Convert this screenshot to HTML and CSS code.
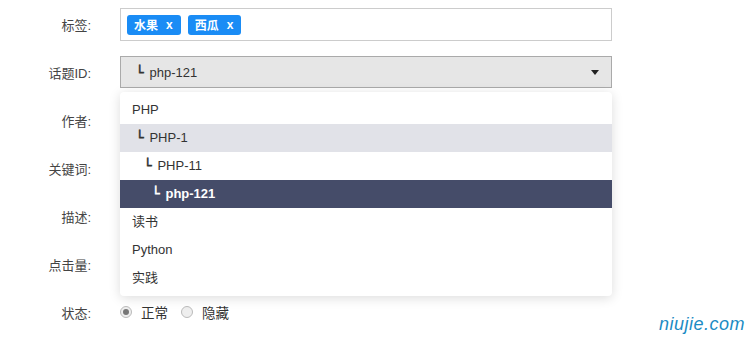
FILE: index.html
```html
<!DOCTYPE html>
<html lang="zh-CN">

<head>
    <meta charset="UTF-8" />
    <meta name="viewport" content="width=device-width, initial-scale=1.0" />
    <title>编辑文章</title>
    <link rel="stylesheet" href="styles.css">
</head>

<body>
    <form class="form">
        <div class="row row-tags">
            <label class="label">标签:</label>
            <div class="tags">
                <span class="tag">水果<i class="tag-close">x</i></span>
                <span class="tag">西瓜<i class="tag-close">x</i></span>
            </div>
        </div>
        <div class="row">
            <label class="label">话题ID:</label>
            <div class="select">
                <div class="select-value"><span class="branch">└</span> php-121</div>
                <span class="select-arrow"></span>
                <ul class="select-menu">
                    <li class="option">PHP</li>
                    <li class="option level-1 hover"><span class="branch">└</span> PHP-1</li>
                    <li class="option level-2"><span class="branch">└</span> PHP-11</li>
                    <li class="option level-3 selected"><span class="branch">└</span> php-121</li>
                    <li class="option">读书</li>
                    <li class="option">Python</li>
                    <li class="option">实践</li>
                </ul>
            </div>
        </div>
        <div class="row">
            <label class="label">作者:</label>
            <input class="input" type="text" />
        </div>
        <div class="row">
            <label class="label">关键词:</label>
            <input class="input" type="text" />
        </div>
        <div class="row">
            <label class="label">描述:</label>
            <input class="input" type="text" />
        </div>
        <div class="row">
            <label class="label">点击量:</label>
            <input class="input" type="text" />
        </div>
        <div class="row">
            <label class="label">状态:</label>
            <div class="radios">
                <label class="radio"><input type="radio" name="status" checked />正常</label>
                <label class="radio"><input type="radio" name="status" />隐藏</label>
            </div>
        </div>
    </form>
    <div class="brand">niujie.com</div>
</body>

</html>
```

FILE: styles.css
```css
body {
    margin: 0;
    font-family: "Liberation Sans", "Noto Sans CJK SC", sans-serif;
    font-size: 13px;
    color: #333;
    background-color: #fff;
}

.form {
    padding-top: 8px;
    margin: 0;
}

.row {
    display: grid;
    grid-template-columns: 91px 492px;
    column-gap: 29px;
    align-items: center;
    height: 32px;
    margin-bottom: 16px;
}

.row-tags {
    height: 33px;
    margin-bottom: 15px;
}

.label {
    text-align: right;
    color: #444;
}

.tags {
    height: 33px;
    box-sizing: border-box;
    border: 1px solid #ccc;
    padding: 0 6px;
    display: flex;
    align-items: center;
    gap: 7px;
}

.tag {
    display: inline-flex;
    align-items: center;
    height: 20px;
    padding: 0 8px 0 7px;
    background-color: #1a8cf5;
    color: #fff;
    font-size: 12px;
    font-weight: bold;
    border-radius: 3px;
}

.tag-close {
    font-style: normal;
    margin-left: 8px;
}

.select {
    position: relative;
    height: 32px;
    box-sizing: border-box;
    border: 1px solid #aaa;
    background-color: #e6e6e6;
    display: flex;
    align-items: center;
    justify-content: space-between;
    padding: 0 12px 0 15px;
    color: #333;
}

.select-arrow {
    width: 0;
    height: 0;
    border-left: 4px solid transparent;
    border-right: 4px solid transparent;
    border-top: 5px solid #222;
}

.branch {
    font-family: "DejaVu Sans", sans-serif;
    -webkit-text-stroke: 0.6px currentColor;
    margin-right: 2px;
}

.select-menu {
    position: absolute;
    top: 35px;
    left: -1px;
    width: 492px;
    box-sizing: border-box;
    margin: 0;
    padding: 4px 0;
    list-style: none;
    background-color: #fff;
    border-radius: 4px;
    box-shadow: 0 2px 12px rgba(0, 0, 0, 0.14);
    z-index: 10;
}

.option {
    height: 28px;
    line-height: 28px;
    padding-left: 12px;
    color: #333;
}

.level-1 {
    padding-left: 16px;
}

.level-2 {
    padding-left: 24px;
}

.level-3 {
    padding-left: 32px;
}

.option.hover {
    background-color: #e1e2e8;
}

.option.selected {
    background-color: #454c69;
    color: #fff;
    font-weight: bold;
}

.input {
    height: 32px;
    box-sizing: border-box;
    border: 1px solid #ccc;
    padding: 0 10px;
    font-size: 13px;
}

.radios {
    display: flex;
    align-items: center;
    gap: 13px;
}

.radio {
    display: flex;
    align-items: center;
    font-size: 13.5px;
    color: #333;
}

.radio input {
    appearance: none;
    -webkit-appearance: none;
    width: 12px;
    height: 12px;
    margin: 0 9px 0 0;
    border: 1px solid #bbb;
    border-radius: 50%;
    background-color: #eee;
    box-sizing: border-box;
    position: relative;
}

.radio input:checked::after {
    content: "";
    position: absolute;
    left: 2px;
    top: 2px;
    width: 6px;
    height: 6px;
    border-radius: 50%;
    background-color: #777;
}

.brand {
    position: absolute;
    right: 1px;
    bottom: 3px;
    font-size: 18px;
    font-style: italic;
    color: #1b8bc4;
    letter-spacing: 0.5px;
}
```
